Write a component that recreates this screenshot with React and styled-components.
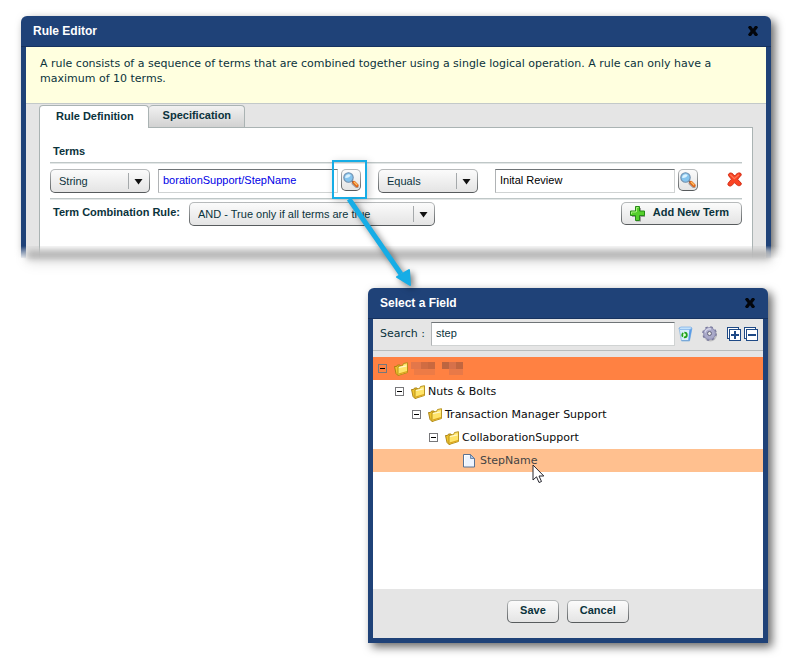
import React, { useState } from "react";
import styled, { createGlobalStyle } from "styled-components";

const GlobalStyle = createGlobalStyle`
  * {
    box-sizing: border-box;
  }
  body {
    margin: 0;
    background: #ffffff;
    color: #0b333c;
    font-family: "Liberation Sans", Arial, sans-serif;
    font-size: 11px;
  }
  button, input, select {
    font: inherit;
    color: inherit;
    margin: 0;
  }
`;

const Page = styled.main`
  padding: 16px 24px 26px 21px;
`;

const Window = styled.section`
  position: relative;
  border-radius: 6px 6px 0 0;
  background: #1f4278;
  box-shadow: 4px 4px 10px rgba(0, 0, 0, 0.6);
`;

const EditorWindow = styled(Window)`
  padding: 0 5px;
`;

const DialogWindow = styled(Window)`
  width: 400px;
  max-width: 100%;
  margin: 30px 3px 0 auto;
  padding: 0 5px 5px;
`;

const TitleBar = styled.header`
  display: flex;
  align-items: center;
  justify-content: space-between;
  height: 31px;
  margin: 0 -5px;
  padding: 0 12px;
  border-bottom: 1px solid #16325f;
`;

const Title = styled.h1`
  margin: 0;
  font-size: 12px;
  line-height: 16px;
  color: #ffffff;
`;

const IconButton = styled.button`
  display: flex;
  flex: none;
  padding: 0;
  border: 0;
  background: none;
  cursor: pointer;
`;

const Message = styled.p`
  margin: 0;
  padding: 9px 14px 17px;
  background: #ffffdf;
  border-bottom: 1px solid #c3c9c9;
  font-family: "DejaVu Sans", Verdana, sans-serif;
  font-size: 11px;
  line-height: 15px;
`;

const EditorBody = styled.div`
  padding: 1px 13px 0;
  background: #e5e5e5;
`;

const Tabs = styled.div`
  display: flex;
  align-items: flex-start;
`;

const Tab = styled.button`
  height: ${(props) => (props.$active ? "23px" : "22px")};
  padding: ${(props) => (props.$active ? "0 14px 3px 16px" : "0 13px 3px 14px")};
  border: 1px solid #aab3b3;
  border-bottom: 0;
  border-left-width: ${(props) => (props.$active ? "1px" : "0")};
  border-radius: 4px 4px 0 0;
  background: ${(props) =>
    props.$active ? "#ffffff" : "linear-gradient(#f1f1f1, #d2d2d2)"};
  margin-bottom: ${(props) => (props.$active ? "-1px" : "0")};
  position: relative;
  z-index: ${(props) => (props.$active ? 1 : 0)};
  font-weight: bold;
  cursor: pointer;
`;

const Panel = styled.div`
  padding: 15px 10px 32px;
  border: 1px solid #aab3b3;
  border-bottom: 0;
  background: #ffffff;
`;

const SectionTitle = styled.h2`
  margin: 0;
  padding: 0 3px 3px;
  font-size: 11px;
  line-height: 16px;
`;

const TermRow = styled.div`
  display: flex;
  align-items: flex-start;
  padding: 6px 0 5px;
  border-top: 1px solid #bfc7c7;
  border-bottom: 1px solid #bfc7c7;
  box-shadow: 0 1px #e3e7e7, inset 0 1px #e3e7e7;
`;

const CombineRow = styled.div`
  display: flex;
  align-items: flex-start;
  padding-top: 3px;
`;

const CombineLabel = styled.label`
  width: 139px;
  padding-left: 3px;
  font-weight: bold;
  line-height: 20px;
`;

const halo = `
  border: 1px solid transparent;
  border-radius: 5px;
  background:
    linear-gradient(#fbfbfb, #e4e4e4) padding-box,
    linear-gradient(#b9bcbd, #55595b) border-box;
`;

const SelectBox = styled.span`
  display: grid;
  flex: none;
  align-items: center;
  width: ${(props) => props.$width};
`;

const Select = styled.select`
  ${halo}
  grid-area: 1 / 1;
  width: 100%;
  height: 24px;
  padding: 0 30px 0 8px;
  appearance: none;
  outline: none;
`;

const SelectArrow = styled.svg`
  grid-area: 1 / 1;
  justify-self: end;
  pointer-events: none;
`;

const Field = styled.span`
  position: relative;
  display: flex;
  flex: 1;
  gap: 3px;
  align-items: flex-start;
  margin: ${(props) => props.$margin};
`;

const TextInput = styled.input`
  flex: 1;
  min-width: 0;
  height: 24px;
  padding: 0 4px 2px;
  border: 1px solid #d0d3d3;
  border-top-color: #6f7477;
  border-left-color: #b0b3b5;
  background: #ffffff;
  color: ${(props) => props.$color || "#0b333c"};
  outline: none;
`;

const LookupButton = styled.button`
  ${halo}
  display: flex;
  align-items: center;
  justify-content: center;
  flex: none;
  width: 20px;
  height: 22px;
  padding: 0;
  cursor: pointer;
`;

const PushButton = styled.button`
  ${halo}
  display: flex;
  align-items: center;
  gap: 7px;
  height: 23px;
  padding: 0 12px 3px;
  font-weight: bold;
  cursor: pointer;
`;

const AddButton = styled(PushButton)`
  margin-left: auto;
  padding: 0 12px 0 8px;

  span {
    padding-bottom: 3px;
  }
`;

const DeleteButton = styled(IconButton)`
  margin: 3px 0 0 29px;
`;

const BottomFade = styled.div`
  position: absolute;
  left: -14px;
  right: -22px;
  bottom: -22px;
  height: 34px;
  background: linear-gradient(rgba(255, 255, 255, 0), #ffffff 13px);
  overflow: hidden;
  pointer-events: none;

  &::before {
    content: "";
    position: absolute;
    left: 20px;
    right: 22px;
    top: 4px;
    height: 9px;
    background: #b4b4b4;
    box-shadow: 0 3px 12px rgba(0, 0, 0, 0.15);
    filter: blur(3px);
  }
`;

const Highlight = styled.span`
  position: absolute;
  top: -9px;
  right: -6px;
  width: 35px;
  height: 39px;
  border: 2px solid #16ade6;
  box-shadow: 2px 2px 8px rgba(0, 0, 0, 0.2);
  pointer-events: none;
  z-index: 3;
`;

const Pointer = styled.svg`
  position: absolute;
  top: 28px;
  right: -60px;
  filter: drop-shadow(3px 3px 3px rgba(0, 0, 0, 0.5));
  pointer-events: none;
  z-index: 3;
`;

const SearchBar = styled.div`
  display: flex;
  align-items: center;
  height: 32px;
  padding: 0 5px 2px 7px;
  background: #e5e5e5;
  border-bottom: 1px solid #b8bcbc;
`;

const SearchLabel = styled.label`
  flex: none;
  width: 51px;
  font-family: "DejaVu Sans", Verdana, sans-serif;
`;

const SearchTools = styled.div`
  display: flex;
  align-items: center;
  padding-left: 3px;
`;

const ToolButton = styled(IconButton)`
  margin-right: ${(props) => props.$gap || "0"};
`;

const Tree = styled.ul`
  margin: 0;
  padding: 0 0 117px;
  border-top: 6px solid #e5e5e5;
  background: #ffffff;
  color: #0b0b0b;
  list-style: none;
  font-family: "DejaVu Sans", Verdana, sans-serif;
`;

const TreeRow = styled.li`
  position: relative;
  display: flex;
  align-items: center;
  height: 23px;
  padding-left: ${(props) => 5 + props.$level * 17}px;
  background: ${(props) => props.$background || "transparent"};
  color: ${(props) => props.$color || "inherit"};
`;

const Toggle = styled(IconButton)`
  width: 9px;
  margin-right: 7px;
`;

const TreeIcon = styled.svg`
  flex: none;
  margin-right: 1px;
`;

const Cursor = styled.svg`
  position: absolute;
  left: 159px;
  top: 15px;
`;

const Footer = styled.footer`
  display: flex;
  justify-content: center;
  gap: 8px;
  padding: 11px 0 15px;
  background: #e5e5e5;
`;

const CloseIcon = () => (
  <svg width="12" height="12" viewBox="0 0 12 12">
    <path
      d="M2 1h2l2 2.700L8 1h2l1 1.400L8.300 6 11 9.500 10 11H8L6 8.300 4 11H2L1 9.500 3.700 6 1 2.400z"
      fill="#03060c"
    />
  </svg>
);

const MagnifierIcon = () => (
  <svg width="16" height="16" viewBox="0 0 16 16">
    <path d="M10 11.500l4 3.500" stroke="#77777c" strokeWidth="3" strokeLinecap="round" opacity="0.6" />
    <path d="M9 9l2 2" stroke="#5b5f70" strokeWidth="2" />
    <path d="M11 10.500l3 3" stroke="#dd6418" strokeWidth="3.200" strokeLinecap="round" />
    <path d="M11.300 10.300l2.500 2.500" stroke="#ffc063" strokeWidth="1.300" strokeLinecap="round" />
    <circle cx="5.500" cy="5.500" r="4.700" fill="#84c4ee" stroke="#6f8fae" strokeWidth="1.100" />
    <path d="M2.200 6a3.400 3.400 0 0 1 5.500-3c-.6 2-3 3.300-5.500 3z" fill="#d9f2ff" />
  </svg>
);

const DeleteIcon = () => (
  <svg width="15" height="15" viewBox="0 0 15 15">
    <path
      d="M2.700 1.200C4.200.500 5.700 1.400 7.700 4 9.300 1.900 11.200.500 13 1c1.500.4 1.500 2 .7 2.900C12.300 5 11.300 6 10.700 7.300c.9 1.400 2 2.400 3.300 3.500 1.100 1.500-.8 3.200-2.400 2.900-1.700-.5-2.900-1.700-4.100-3.100-1.200 1.500-2.300 2.900-4 3.400-1.700.2-3.200-1.100-2.400-2.600C1.900 9.800 3.300 8.700 4.500 7.200 3.500 5.900 2.200 4.800 1.500 3.500 1.100 2.400 1.800 1.500 2.700 1.200z"
      fill="#fa4323"
      stroke="#cf2a12"
      strokeWidth="1"
    />
    <path d="M3.300 2.700l4 4 4.500-4" fill="none" stroke="#ff7857" strokeWidth="1.200" />
  </svg>
);

const PlusIcon = () => (
  <svg width="16" height="16" viewBox="0 0 16 16">
    <path d="M6 2h5v4h4v5h-4v4.500H6V11H2V6h4z" fill="#686868" opacity="0.6" />
    <path
      d="M5.500.500h4v4.500h5v4.500h-5v5h-4v-5h-5V5h5z"
      fill="#55cf2b"
      stroke="#278a17"
      strokeWidth="1"
    />
    <path d="M6.500 6V1.500h2M1.500 8V6H6" fill="none" stroke="#a9ee80" strokeWidth="1" />
  </svg>
);

const BinIcon = () => (
  <svg width="15" height="16" viewBox="0 0 15 16">
    <path d="M1 2h13l-2.500 13h-8z" fill="#d9edfa" stroke="#8bb7e0" strokeWidth="0.800" />
    <path d="M11.500 2.500H14L11.700 14.500h-1.500z" fill="#5a9be6" />
    <path d="M1 2l2-1h9.500l1.500 1-2 1.500H2z" fill="#c3e2fb" stroke="#7aaee6" strokeWidth="0.700" />
    <path d="M3.500 14.500h8" stroke="#79a8d8" strokeWidth="1" />
    <circle cx="6.500" cy="9" r="2.300" fill="#e6ffe0" stroke="#1fa01a" strokeWidth="1.800" strokeDasharray="3.800 1" />
  </svg>
);

const GearIcon = () => (
  <svg width="18" height="18" viewBox="0 0 18 18">
    <circle cx="9.300" cy="9.800" r="6.700" fill="#77777f" opacity="0.35" />
    <circle cx="8.500" cy="8.500" r="6.300" fill="none" stroke="#77779a" strokeWidth="2" strokeDasharray="2.474 2.474" />
    <circle cx="8.500" cy="8.500" r="4.200" fill="none" stroke="#a9a9c9" strokeWidth="4" />
    <circle cx="8.500" cy="8.500" r="5.900" fill="none" stroke="#8080a2" strokeWidth="0.600" />
    <path d="M4 7.500a4.700 4.700 0 0 1 6-3.500" fill="none" stroke="#d4d4e8" strokeWidth="1.500" />
    <circle cx="8.500" cy="8.500" r="2" fill="#e5e5e5" stroke="#62627e" strokeWidth="1" />
  </svg>
);

const StackIcon = ({ plus }) => (
  <svg width="14" height="14" viewBox="0 0 14 14" shapeRendering="crispEdges">
    <path d="M.500 11.500V.500h11" fill="none" stroke="#1f4a86" />
    <path d="M1 11V1h10v1H2v9z" fill="#ffffff" />
    <path d="M0 11.500h2M11.500 0v2" stroke="#1f4a86" />
    <rect x="2.500" y="2.500" width="11" height="11" fill="#ffffff" stroke="#1f4a86" />
    <path d="M4 7h8v2H4z" fill="#1f4a86" />
    {plus && <path d="M7 4h2v8H7z" fill="#1f4a86" />}
  </svg>
);

const ToggleIcon = () => (
  <svg width="9" height="9" viewBox="0 0 9 9" shapeRendering="crispEdges">
    <rect x="0.500" y="0.500" width="8" height="8" fill="none" stroke="#77777a" />
    <path d="M2 4h5v1H2z" fill="#000000" />
  </svg>
);

const FolderIcon = () => (
  <TreeIcon width="16" height="16" viewBox="0 0 16 16">
    <path d="M.500 5.500h2l1-1.500h2.500l1 1.500v7.500l-3 1.500-2-2z" fill="#f0c52e" stroke="#a57c0d" strokeWidth="0.900" />
    <path d="M4 5.500l4.500-1 1-2 4-.8v9.800L4 14.500z" fill="#ffe469" stroke="#b08a14" strokeWidth="0.900" />
    <path d="M5 6.500l7.500-1.700" stroke="#fff9cf" strokeWidth="1.200" />
    <path d="M4.500 12.500l8.500-2.500v1.300l-8.500 2.500z" fill="#dca51b" />
  </TreeIcon>
);

const FileIcon = () => (
  <TreeIcon width="16" height="16" viewBox="0 0 16 16">
    <path d="M.500 1.500h7l4 4v8.500H.500z" fill="#eef5ff" stroke="#5a7394" strokeWidth="1" />
    <path d="M7.500 1.500v4h4z" fill="#a9c4e6" stroke="#5a7394" strokeWidth="0.800" />
    <path d="M1.500 2.500H6M1.500 2.500v10" stroke="#ffffff" />
  </TreeIcon>
);

const HiddenName = () => (
  <svg width="54" height="15" viewBox="0 0 54 15" shapeRendering="crispEdges">
    <path d="M0 1h10v7H0z" fill="#e3774a" />
    <path d="M10 1h7v7h-7z" fill="#d06c42" />
    <path d="M17 1h7v7h-7z" fill="#c9683f" />
    <path d="M3 8h7v6H3zM10 8h7v6h-7zM17 8h7v6h-7z" fill="#ed7b46" />
    <path d="M31 1h7v7h-7z" fill="#bd6540" />
    <path d="M38 1h7v7h-7z" fill="#d7714a" />
    <path d="M45 1h7v7h-7z" fill="#c2663f" />
    <path d="M38 8h14v6H38z" fill="#e87948" />
  </svg>
);

const DropDown = ({ id, label, width, options }) => (
  <SelectBox $width={width}>
    <Select id={id} aria-label={label}>
      {options.map((option) => (
        <option key={option}>{option}</option>
      ))}
    </Select>
    <SelectArrow width="22" height="16" viewBox="0 0 22 16">
      <path d="M.500 0v16" stroke="#a5a9ab" />
      <path d="M6.500 6h8l-4 5.500z" fill="#111111" />
    </SelectArrow>
  </SelectBox>
);

const RuleEditor = () => {
  const [tab, setTab] = useState("definition");
  const [source, setSource] = useState("borationSupport/StepName");
  const [value, setValue] = useState("Inital Review");

  return (
    <EditorWindow>
      <TitleBar>
        <Title>Rule Editor</Title>
        <IconButton aria-label="Close">
          <CloseIcon />
        </IconButton>
      </TitleBar>
      <Message>
        A rule consists of a sequence of terms that are combined together using
        a single logical operation. A rule can only have a maximum of 10 terms.
      </Message>
      <EditorBody>
        <Tabs>
          <Tab $active={tab === "definition"} onClick={() => setTab("definition")}>
            Rule Definition
          </Tab>
          <Tab $active={tab === "specification"} onClick={() => setTab("specification")}>
            Specification
          </Tab>
        </Tabs>
        <Panel>
          <SectionTitle>Terms</SectionTitle>
          <TermRow>
            <DropDown label="Type" width="100px" options={["String", "Number", "Date"]} />
            <Field $margin="0 17px 0 8px">
              <TextInput
                aria-label="Field"
                $color="#0000e6"
                value={source}
                onChange={(e) => setSource(e.target.value)}
              />
              <LookupButton aria-label="Select a field">
                <MagnifierIcon />
              </LookupButton>
              <Highlight />
              <Pointer width="80" height="100" viewBox="0 0 80 100">
                <path d="M8 2L60 77" stroke="#16ade6" strokeWidth="5" />
                <path d="M56 80l12-7 1 15z" fill="#16ade6" stroke="#16ade6" strokeWidth="2" strokeLinejoin="round" />
              </Pointer>
            </Field>
            <DropDown label="Operator" width="100px" options={["Equals", "Not Equals"]} />
            <Field $margin="0 0 0 17px">
              <TextInput
                aria-label="Value"
                $color="#000000"
                value={value}
                onChange={(e) => setValue(e.target.value)}
              />
              <LookupButton aria-label="Select a value">
                <MagnifierIcon />
              </LookupButton>
            </Field>
            <DeleteButton aria-label="Delete term">
              <DeleteIcon />
            </DeleteButton>
          </TermRow>
          <CombineRow>
            <CombineLabel htmlFor="combine">Term Combination Rule:</CombineLabel>
            <DropDown
              id="combine"
              width="246px"
              options={[
                "AND - True only if all terms are true",
                "OR - True if any term is true",
              ]}
            />
            <AddButton>
              <PlusIcon />
              <span>Add New Term</span>
            </AddButton>
          </CombineRow>
        </Panel>
      </EditorBody>
      <BottomFade />
    </EditorWindow>
  );
};

const folders = ["Nuts & Bolts", "Transaction Manager Support", "CollaborationSupport"];

const FieldDialog = () => {
  const [search, setSearch] = useState("step");

  return (
    <DialogWindow>
      <TitleBar>
        <Title as="h2">Select a Field</Title>
        <IconButton aria-label="Close">
          <CloseIcon />
        </IconButton>
      </TitleBar>
      <SearchBar>
        <SearchLabel htmlFor="search">Search :</SearchLabel>
        <TextInput id="search" value={search} onChange={(e) => setSearch(e.target.value)} />
        <SearchTools>
          <ToolButton aria-label="Clear" $gap="8px">
            <BinIcon />
          </ToolButton>
          <ToolButton aria-label="Settings" $gap="8px">
            <GearIcon />
          </ToolButton>
          <ToolButton aria-label="Expand all" $gap="3px">
            <StackIcon plus />
          </ToolButton>
          <ToolButton aria-label="Collapse all">
            <StackIcon />
          </ToolButton>
        </SearchTools>
      </SearchBar>
      <Tree>
        <TreeRow $level={0} $background="#ff8142">
          <Toggle aria-label="Collapse">
            <ToggleIcon />
          </Toggle>
          <FolderIcon />
          <HiddenName />
        </TreeRow>
        {folders.map((name, i) => (
          <TreeRow key={name} $level={i + 1}>
            <Toggle aria-label="Collapse">
              <ToggleIcon />
            </Toggle>
            <FolderIcon />
            {name}
          </TreeRow>
        ))}
        <TreeRow $level={5} $background="#ffc08f" $color="#444444">
          <FileIcon />
          StepName
          <Cursor width="14" height="20" viewBox="0 0 14 20">
            <path
              d="M1 1v15l3.500-3.200L7 18.500l2.500-1-2.500-5.500h4.800z"
              fill="#ffffff"
              stroke="#26262e"
              strokeWidth="1"
            />
          </Cursor>
        </TreeRow>
      </Tree>
      <Footer>
        <PushButton>Save</PushButton>
        <PushButton>Cancel</PushButton>
      </Footer>
    </DialogWindow>
  );
};

const App = () => {
  return (
    <>
      <GlobalStyle />
      <Page>
        <RuleEditor />
        <FieldDialog />
      </Page>
    </>
  );
};

export default App;
